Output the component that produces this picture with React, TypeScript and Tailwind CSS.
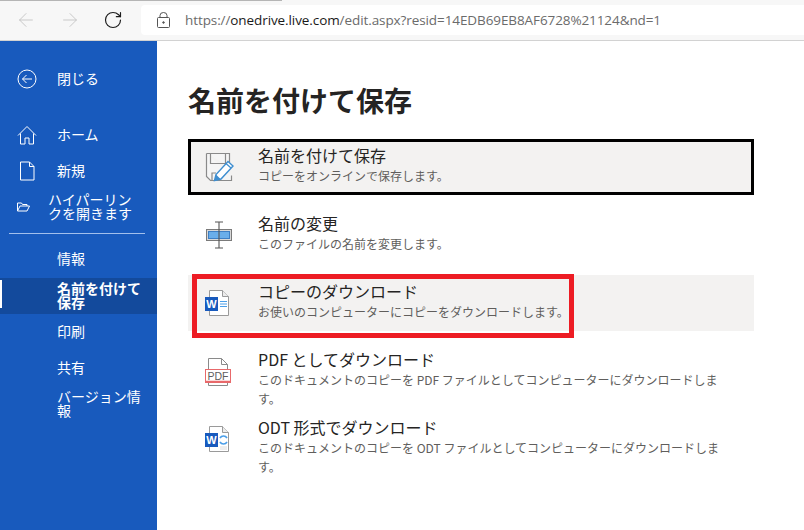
import { ArrowLeft, ArrowRight, RotateCw } from "lucide-react";
import type { ReactNode } from "react";

const jp = "font-['Segoe_UI','Noto_Sans_CJK_JP','Noto_Sans',sans-serif]";

function SaveAsIcon() {
  return (
    <svg width="30" height="30" viewBox="0 0 30 30" fill="none">
      <path d="M1.500 1.500h23v13M1.500 1.500v23l4 4h21v-5" stroke="#8a8a8a" strokeWidth="1.200" fill="#f5f5f5" />
      <path d="M5.500 1.500v10h15v-10" stroke="#8a8a8a" strokeWidth="1.200" />
      <path d="M7 28v-7h4" stroke="#8a8a8a" strokeWidth="1.200" />
      <path d="M9.500 28.500l1.500-6L23 9.500l5 4.500L16 27z" fill="#fff" stroke="#3e8ed0" strokeWidth="1.400" />
      <path d="M9.500 28.500l1.500-6 4.500 4.500z" fill="#3e8ed0" />
      <path d="M21 11.500l5 4.500" stroke="#3e8ed0" strokeWidth="1.200" />
    </svg>
  );
}

function RenameIcon() {
  return (
    <svg width="28" height="28" viewBox="0 0 28 28" fill="none">
      <rect x="1.500" y="8.500" width="25" height="11" fill="#d8d8d8" stroke="#7a7a7a" />
      <rect x="3.500" y="10.500" width="21" height="7" fill="#6aaeea" stroke="#3e7fc4" />
      <path d="M10 1h8M14 1v26M10 27h8" stroke="#555" strokeWidth="1.100" />
    </svg>
  );
}

function WordIcon({ convert }: { convert?: boolean }) {
  return (
    <svg width="25" height="28" viewBox="0 0 25 28" fill="none">
      <path d="M4.500 1.500h13l6 6v19h-19z" fill="#fff" stroke="#9a9a9a" />
      <path d="M17.500 1.500v6h6" stroke="#9a9a9a" fill="#ececec" />
      <rect x="0" y="8" width="13" height="14" fill="#185abd" />
      <text x="6.500" y="19" fontSize="11" fontWeight="700" textAnchor="middle" fill="#fff" fontFamily="Liberation Sans">W</text>
      {convert ? (
        <>
          <path d="M15 13a4 4 0 0 1 7 0M22 17a4 4 0 0 1-7 0" stroke="#4a9ee8" strokeWidth="1.600" />
          <path d="M15 22h7M15 24h7" stroke="#dcdcdc" />
        </>
      ) : (
        <path d="M15 12.500h7M15 15h7M15 17.500h7" stroke="#4a9ee8" />
      )}
    </svg>
  );
}

function PdfIcon() {
  return (
    <svg width="26" height="29" viewBox="0 0 26 29" fill="none">
      <path d="M3.500 12V1.500h13l6 6V12M3.500 26v2.500h19V26" stroke="#8a8a8a" fill="#fff" />
      <path d="M16.500 1.500v6h6" stroke="#8a8a8a" />
      <rect x="0.500" y="12.500" width="25" height="13" fill="#fff" stroke="#e8696b" />
      <text x="13" y="22.500" fontSize="10.500" textAnchor="middle" fill="#5e5e5e" fontFamily="Liberation Sans">PDF</text>
      <path d="M1 24.500h24" stroke="#e8696b" strokeWidth="1.500" />
    </svg>
  );
}

function NavItem({ icon, children, active, bold }: { icon?: ReactNode; children: ReactNode; active?: boolean; bold?: boolean }) {
  return (
    <div className={`relative h-9 flex items-center text-[14px] leading-[14px] text-white ${active ? "bg-[#134a9c]" : ""} ${bold ? "font-bold" : ""}`}>
      {active && <div className="absolute left-0 top-[2px] w-[2px] h-[28px] bg-white" />}
      <div className="w-[57px] shrink-0 flex justify-center pr-[3px]">{icon}</div>
      <div className="w-[90px] pb-[2px]">{children}</div>
    </div>
  );
}

function Row({ icon, title, sub, selected, hover, children }: { icon: ReactNode; title: string; sub: string; selected?: boolean; hover?: boolean; children?: ReactNode }) {
  return (
    <div className={`relative h-14 flex ${selected ? "bg-[#f3f2f1] border-[3px] border-black" : hover ? "bg-[#f3f2f1]" : ""}`}>
      <div className={`flex items-center shrink-0 ${selected ? "w-[67px] pl-[14px]" : "w-[70px] pl-[17px]"}`}>{icon}</div>
      <div className={`flex-1 ${selected ? "pt-[2px]" : "pt-[5px]"}`}>
        <div className="text-[16px] leading-[22px] text-[#252423]">{title}</div>
        <div className="text-[12px] leading-[19px] text-[#605e5c] w-[479px]">{sub}</div>
      </div>
      {children}
    </div>
  );
}

export default function App() {
  return (
    <div className={`w-[804px] h-[530px] overflow-hidden flex flex-col bg-white ${jp}`}>
      <div className="relative h-[41px] shrink-0 bg-[#f7f7f7] border-b border-[#d2d2d2] flex items-center">
        <div className="absolute left-0 top-0 w-[282px] h-px bg-[#b5b5b5]" />
        <div className="flex items-center gap-[22px] pl-[15px] w-[141px] shrink-0">
          <ArrowLeft size={22} strokeWidth={1} className="text-[#c4c4c4]" />
          <ArrowRight size={22} strokeWidth={1} className="text-[#c4c4c4]" />
          <RotateCw size={20} strokeWidth={1.400} className="text-[#1c1c1c]" />
        </div>
        <div className="flex-1 h-[30px] bg-white rounded-l-[4px] flex items-center pl-[16px]">
          <svg width="13" height="16" viewBox="0 0 13 16" fill="none" stroke="#555">
            <rect x="0.500" y="5.500" width="12" height="10" rx="1" />
            <path d="M3 5.500V3.500a3.500 3 0 0 1 7 0v2" />
            <circle cx="6.500" cy="10.500" r=".8" fill="#555" />
          </svg>
          <div className="ml-[15px] text-[13.5px] text-[#6b6b6b] whitespace-nowrap font-['Open_Sans',sans-serif] tracking-[-0.09px]">
            https://<span className="text-[#1a1a1a]">onedrive.live.com</span>/edit.aspx?resid=14EDB69EB8AF6728%21124&amp;nd=1
          </div>
        </div>
      </div>
      <div className="flex flex-1">
        <div className="w-[157px] shrink-0 bg-[#185abd] pt-[20px]">
          <NavItem icon={<svg width="20" height="20" viewBox="0 0 20 20" fill="none" stroke="#fff"><circle cx="10" cy="10" r="9" /><path d="M15 10H5.500M9.500 6l-4 4 4 4" /></svg>}>閉じる</NavItem>
          <div className="h-5" />
          <NavItem icon={<svg width="20" height="20" viewBox="0 0 20 20" fill="none" stroke="#fff"><path d="M1 10.500L10 1.500l9 9M3.500 8.500V19H8v-6h4v6h4.500V8.500" /></svg>}>ホーム</NavItem>
          <NavItem icon={<svg width="16" height="20" viewBox="0 0 16 20" fill="none" stroke="#fff"><path d="M1.500 1h9l4.500 4.500V19H1.500zM10.500 1v4.500H15" /></svg>}>新規</NavItem>
          <div className="h-9 flex items-center text-[14px] leading-[14px] text-white">
            <div className="w-[49px] shrink-0 pl-[17px]">
              <svg width="13" height="10" viewBox="0 0 13 10" fill="none" stroke="#fff"><path d="M.5 9V1h4l1 1.500h4.500V4M.5 9h9.500L12.500 4H3z" /></svg>
            </div>
            <div className="w-[85px] -ml-[1px] pb-[2px]">ハイパーリンクを開きます</div>
          </div>
          <div className="h-px bg-[#a3c0ec] ml-[9px] mr-[12px] mt-[8px] mb-[7px]" />
          <NavItem>情報</NavItem>
          <div className="h-px" />
          <NavItem active bold>名前を付けて保存</NavItem>
          <NavItem>印刷</NavItem>
          <NavItem>共有</NavItem>
          <NavItem>バージョン情報</NavItem>
        </div>
        <div className="flex-1 pl-[31px] pr-[50px]">
          <h1 className="text-[28px] leading-[38px] font-bold text-[#252423] pt-[40px] pb-[20px]">名前を付けて保存</h1>
          <div className="flex flex-col gap-3">
            <Row selected icon={<SaveAsIcon />} title="名前を付けて保存" sub="コピーをオンラインで保存します。" />
            <Row icon={<RenameIcon />} title="名前の変更" sub="このファイルの名前を変更します。" />
            <Row hover icon={<WordIcon />} title="コピーのダウンロード" sub="お使いのコンピューターにコピーをダウンロードします。">
              <div className="absolute left-[4px] top-[-1px] w-[382px] h-[64px] border-[5px] border-[#ed1c24]" />
            </Row>
            <Row icon={<PdfIcon />} title="PDF としてダウンロード" sub="このドキュメントのコピーを PDF ファイルとしてコンピューターにダウンロードします。" />
            <Row icon={<WordIcon convert />} title="ODT 形式でダウンロード" sub="このドキュメントのコピーを ODT ファイルとしてコンピューターにダウンロードします。" />
          </div>
        </div>
      </div>
    </div>
  );
}
